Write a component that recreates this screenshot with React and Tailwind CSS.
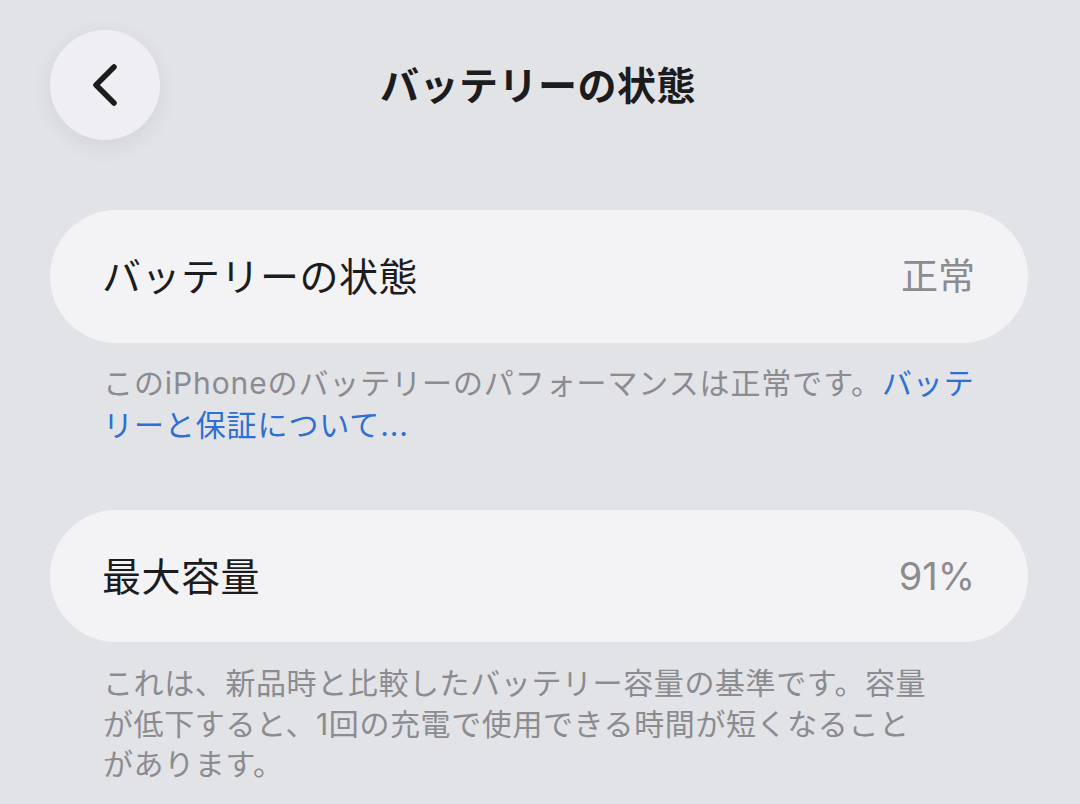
export default function App() {
  const font = { fontFamily: '"Inter", "Noto Sans CJK JP", sans-serif' };
  return (
    <div
      className="w-[1080px] h-[804px] overflow-hidden bg-[#e2e3e7] text-[#1c1c1e]"
      style={font}
    >
      <div className="grid grid-cols-[1fr_auto_1fr] items-center pt-[30px] pl-[50px] pr-[50px]">
        <div className="flex">
          <div className="w-[110px] h-[110px] rounded-full bg-[#efeff3] shadow-[0_6px_24px_rgba(0,0,0,0.07)] flex items-center justify-center">
            <svg width="40" height="48" viewBox="0 0 40 48" fill="none">
              <path
                d="M29 6 L11 24 L29 42"
                stroke="#1c1c1e"
                strokeWidth="5.5"
                strokeLinecap="round"
                strokeLinejoin="round"
              />
            </svg>
          </div>
        </div>
        <div className="text-[39px] font-bold leading-none tracking-[0.5px] pr-[4px]">
          バッテリーの状態
        </div>
        <div />
      </div>

      <div className="mt-[70px] ml-[50px] mr-[52px] h-[133px] rounded-full bg-[#f3f3f5] flex items-center justify-between pl-[52px] pr-[53px]">
        <span className="text-[39px] leading-none tracking-[0.5px]">バッテリーの状態</span>
        <span className="text-[37px] leading-none text-[#8b8b90]">正常</span>
      </div>
      <div className="mt-[19px] pl-[103px] text-[30px] leading-[42px] tracking-[0.9px] text-[#8b8b90]">
        このiPhoneのバッテリーのパフォーマンスは正常です。<span className="text-[#2e6fd3]">バッテ</span>
        <br />
        <span className="text-[#2e6fd3]">リーと保証について...</span>
      </div>

      <div className="mt-[64px] ml-[50px] mr-[52px] h-[132px] rounded-full bg-[#f3f3f5] flex items-center justify-between pl-[52px] pr-[53px]">
        <span className="text-[39px] leading-none tracking-[0.5px]">最大容量</span>
        <span className="text-[38px] leading-none text-[#8b8b90]">91%</span>
      </div>
      <div className="mt-[21px] pl-[103px] text-[30px] leading-[40.5px] tracking-[0.6px] text-[#8b8b90]">
        これは、新品時と比較したバッテリー容量の基準です。容量
        <br />
        が低下すると、1回の充電で使用できる時間が短くなること
        <br />
        があります。
      </div>
    </div>
  );
}
